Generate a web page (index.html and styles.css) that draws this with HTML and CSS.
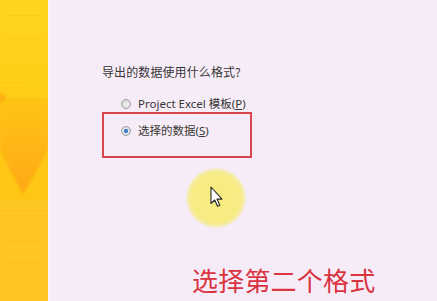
FILE: index.html
```html
<!DOCTYPE html>
<html lang="zh-CN">
<head>
<meta charset="utf-8">
<link rel="stylesheet" href="styles.css">
</head>
<body>
<div class="page">
  <aside class="band">
    <svg width="48" height="301" viewBox="0 0 48 301">
      <defs>
        <linearGradient id="bg" x1="0" y1="0" x2="0" y2="1">
          <stop offset="0" stop-color="#ffd51f"/>
          <stop offset="0.5" stop-color="#ffc814"/>
          <stop offset="1" stop-color="#ffc21a"/>
        </linearGradient>
        <linearGradient id="arr" x1="0" y1="0" x2="0" y2="1">
          <stop offset="0" stop-color="#ffc514"/>
          <stop offset="1" stop-color="#ffa812"/>
        </linearGradient>
        <filter id="blur"><feGaussianBlur stdDeviation="1.2"/></filter>
      </defs>
      <rect width="48" height="301" fill="url(#bg)"/>
      <g filter="url(#blur)">
        <polygon points="0,98 48,98 48,150 23,195 0,150" fill="url(#arr)"/>
        <polygon points="0,92 6,98 0,104" fill="#ffac14"/>
      </g>
      <rect x="0" y="200" width="48" height="101" fill="#ffc72c" opacity="0.5"/>
      <g stroke="#f2b600" stroke-width="1" opacity="0.28">
        <line x1="4" y1="15.5" x2="44" y2="15.5"/>
        <line x1="4" y1="38.5" x2="44" y2="38.5"/>
        <line x1="0" y1="82.5" x2="24" y2="82.5"/>
        <line x1="0" y1="101.5" x2="44" y2="101.5"/>
        <line x1="0" y1="210.5" x2="48" y2="210.5"/>
        <line x1="4" y1="240.5" x2="44" y2="240.5"/>
        <line x1="4" y1="262.5" x2="44" y2="262.5"/>
      </g>
    </svg>
  </aside>
  <main class="content">
    <p class="question">导出的数据使用什么格式?</p>
    <div class="option option-first">
      <span class="radio"></span>
      <span class="label">Project Excel 模板(<u>P</u>)</span>
    </div>
    <div class="highlight">
      <div class="option">
        <span class="radio radio-checked"></span>
        <span class="label">选择的数据(<u>S</u>)</span>
      </div>
    </div>
    <p class="caption">选择第二个格式</p>
    <div class="pointer">
      <svg class="cursor" width="13" height="22" viewBox="0 0 13 22">
        <path d="M1 1 L1 17.5 L4.7 14 L7.5 20.3 L9.8 19.3 L7 13.1 L12 13.1 Z" fill="#ffffff" stroke="#2a2a2a" stroke-width="1.1" stroke-linejoin="round"/>
      </svg>
    </div>
  </main>
</div>
</body>
</html>
```

FILE: styles.css
```css
* { box-sizing: border-box; }
html, body {
  margin: 0;
  padding: 0;
  width: 437px;
  height: 301px;
  overflow: hidden;
  background: #f6ecf7;
}
.page {
  display: flex;
  width: 437px;
  height: 301px;
}
.band {
  width: 48px;
  flex: 0 0 48px;
  height: 301px;
  border-right: 2px solid #fbf2fa;
  box-sizing: content-box;
}
.band svg { display: block; }
.content {
  position: relative;
  flex: 1;
  padding-left: 52px;
  font-family: "Noto Sans", "Noto Sans CJK SC", sans-serif;
  color: #363636;
}
.question {
  margin: 64px 0 0;
  font-family: "Noto Sans CJK SC", sans-serif;
  font-size: 12px;
  line-height: 16px;
  letter-spacing: 0.1px;
}
.option {
  display: flex;
  align-items: center;
  gap: 7px;
  height: 16px;
  font-size: 11.5px;
}
.option-first {
  margin-top: 16px;
  padding-left: 19px;
}
.label {
  font-family: "Noto Sans", "Noto Sans CJK SC", sans-serif;
  line-height: 16px;
}
.label u { text-decoration-thickness: 1px; text-underline-offset: 1px; }
.radio {
  width: 10px;
  height: 10px;
  border-radius: 50%;
  border: 1px solid #a0a0a0;
  background: radial-gradient(circle at 60% 60%, #f2f2f2 0%, #d8d8d8 70%, #c4c4c4 100%);
  flex: 0 0 10px;
}
.radio-checked {
  background: radial-gradient(circle at 50% 50%, #2f65b0 0%, #4a86cc 32%, #dfe6ee 45%, #c9c9c9 100%);
}
.highlight {
  width: 150px;
  height: 46px;
  border: 2px solid #d9444d;
  padding: 9px 0 0 17px;
}
.caption {
  margin: 107px 0 0 90px;
  font-family: "Noto Sans CJK SC", sans-serif;
  font-size: 26px;
  line-height: 30px;
  font-weight: 400;
  color: #d9343f;
  letter-spacing: 0.2px;
}
.pointer {
  position: absolute;
  left: 136px;
  top: 168px;
  width: 60px;
  height: 60px;
  border-radius: 50%;
  background: radial-gradient(circle, #f7ec80 0%, #f7eb84 58%, rgba(247, 235, 132, 0.55) 68%, rgba(246, 236, 247, 0) 72%);
}
.cursor {
  position: absolute;
  left: 24px;
  top: 18px;
}
```
